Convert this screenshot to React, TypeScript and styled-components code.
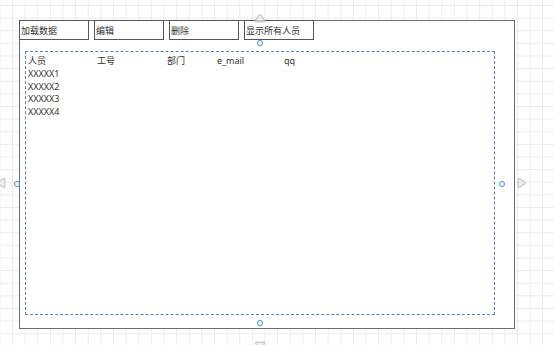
import React from "react";
import styled, { createGlobalStyle } from "styled-components";

const Global = createGlobalStyle`
  html, body { margin: 0; padding: 0; background: #fff; overflow: hidden; }
  body { font-family: "Noto Sans", "Noto Sans CJK SC", sans-serif; }
`;

const Canvas = styled.div`
  position: relative;
  width: 554px;
  height: 345px;
  overflow: hidden;
  box-sizing: border-box;
  padding: 20px 0 0 19px;
  background-color: #fff;
  background-image:
    linear-gradient(to right, #ebebeb 1px, transparent 1px),
    linear-gradient(to bottom, #ebebeb 1px, transparent 1px);
  background-size: 12.63px 12.63px;
  background-position: 12px 5px;
`;

const Frame = styled.div`
  width: 496px;
  height: 309px;
  box-sizing: border-box;
  border: 1px solid #6b6b7b;
  background: #fff;
  display: flex;
  flex-direction: column;
`;

const Toolbar = styled.div`
  display: flex;
  gap: 5px;
  margin: -1px 0 0 -1px;
`;

const ToolButton = styled.div`
  width: 70px;
  height: 20px;
  box-sizing: border-box;
  border: 1px solid #555560;
  background: #fff;
  padding: 1px 0 0 1px;
  font-size: 9px;
  line-height: 18px;
  color: #333;
  white-space: nowrap;
`;

const ListPanel = styled.div`
  margin: 11px 0 0 5px;
  width: 470px;
  height: 264px;
  box-sizing: border-box;
  border: 1px dashed #4f84c4;
  padding: 3px 0 0 2px;
  font-size: 9px;
  line-height: 12.75px;
  color: #333;
`;

const Row = styled.div`
  display: grid;
  grid-template-columns: 69px 70px 50px 67px 1fr;
  white-space: nowrap;
`;

const Handle = styled.span<{ $x: number; $y: number }>`
  position: absolute;
  left: ${(p) => p.$x - 3}px;
  top: ${(p) => p.$y - 3}px;
  width: 6px;
  height: 6px;
  box-sizing: border-box;
  border: 1px solid #4a8ad6;
  border-radius: 50%;
  background: #fff;
`;

const ArrowWrap = styled.span<{ $x: number; $y: number; $rot: number }>`
  position: absolute;
  left: ${(p) => p.$x - 6}px;
  top: ${(p) => p.$y - 6}px;
  width: 12px;
  height: 12px;
  transform: rotate(${(p) => p.$rot}deg);
  opacity: 0.75;
  display: block;
  line-height: 0;
`;

const HoverArrow = ({ x, y, rot }: { x: number; y: number; rot: number }) => (
  <ArrowWrap $x={x} $y={y} $rot={rot}>
    <svg width="12" height="12" viewBox="0 0 12 12">
      <path
        d="M3.2 2.2 Q3.2 1 4.3 1.6 L9.8 5.1 Q10.9 6 9.8 6.9 L4.3 10.4 Q3.2 11 3.2 9.8 Z"
        fill="#ececec"
        stroke="#bdbdbd"
        strokeWidth="1.4"
        strokeLinejoin="round"
      />
    </svg>
  </ArrowWrap>
);

const buttons = ["加载数据", "编辑", "删除", "显示所有人员"];
const headers = ["人员", "工号", "部门", "e_mail", "qq"];
const people = ["XXXXX1", "XXXXX2", "XXXXX3", "XXXXX4"];

export default function App() {
  return (
    <>
      <Global />
      <Canvas>
        <Frame>
          <Toolbar>
            {buttons.map((b) => (
              <ToolButton key={b}>{b}</ToolButton>
            ))}
          </Toolbar>
          <ListPanel>
            <Row>
              {headers.map((h) => (
                <span key={h}>{h}</span>
              ))}
            </Row>
            {people.map((p) => (
              <Row key={p}>
                <span>{p}</span>
              </Row>
            ))}
          </ListPanel>
        </Frame>
        <HoverArrow x={260} y={19} rot={-90} />
        <HoverArrow x={2} y={183} rot={180} />
        <HoverArrow x={521} y={183} rot={0} />
        <HoverArrow x={260} y={345} rot={90} />
        <Handle $x={260} $y={43} />
        <Handle $x={17} $y={184} />
        <Handle $x={502} $y={184} />
        <Handle $x={260} $y={323} />
      </Canvas>
    </>
  );
}
